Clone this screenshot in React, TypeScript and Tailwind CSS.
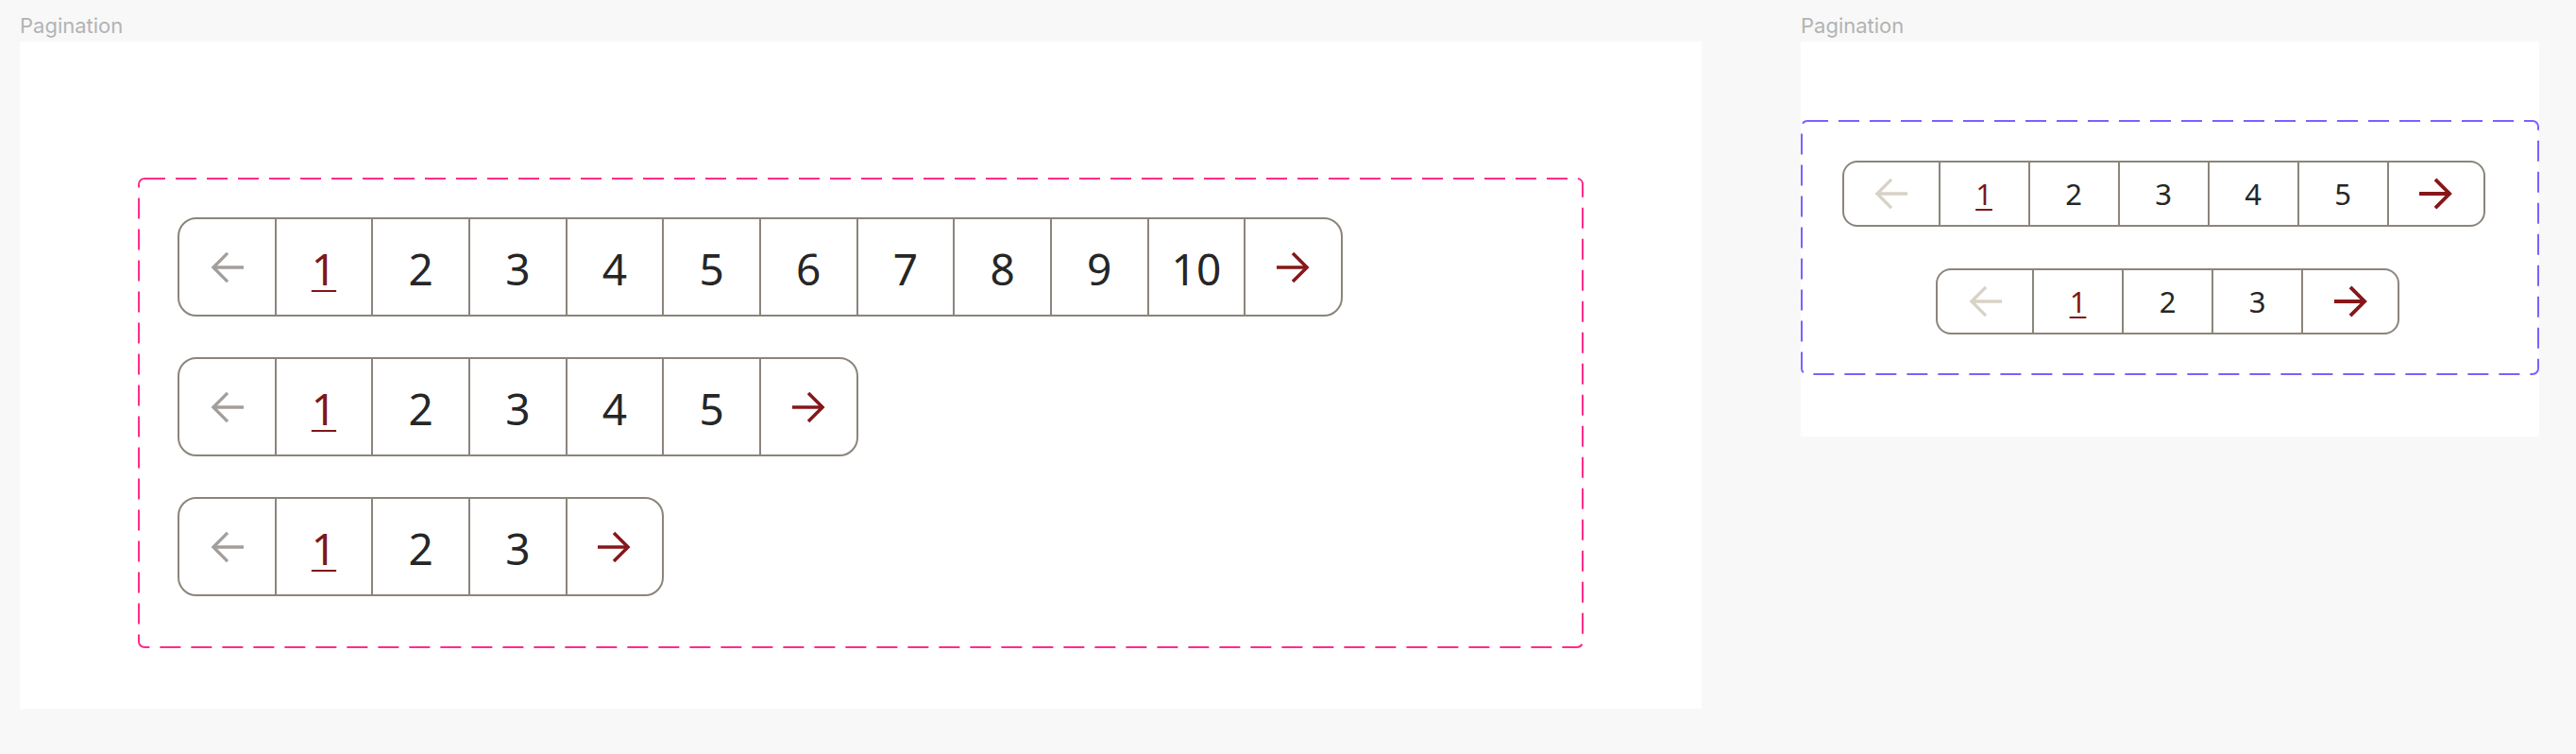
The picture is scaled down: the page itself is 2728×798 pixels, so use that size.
import React from "react";

type Size = "lg" | "sm";

function ArrowLeft({ color, w, h, sw }: { color: string; w: number; h: number; sw: number }) {
  return (
    <svg width={w} height={h} viewBox="0 0 36 34" fill="none">
      <path d="M3 17 H36" stroke={color} strokeWidth={sw} strokeLinecap="butt" />
      <path d="M18.5 1.5 L3 17 L18.5 32.5" stroke={color} strokeWidth={sw} strokeLinecap="butt" strokeLinejoin="miter" />
    </svg>
  );
}

function ArrowRight({ color, w, h, sw }: { color: string; w: number; h: number; sw: number }) {
  return (
    <svg width={w} height={h} viewBox="0 0 36 34" fill="none">
      <path d="M0 17 H33" stroke={color} strokeWidth={sw} strokeLinecap="butt" />
      <path d="M17.5 1.5 L33 17 L17.5 32.5" stroke={color} strokeWidth={sw} strokeLinecap="butt" strokeLinejoin="miter" />
    </svg>
  );
}

function Pagination({ count, size, className = "" }: { count: number; size: Size; className?: string }) {
  const lg = size === "lg";
  const pages = Array.from({ length: count }, (_, i) => i + 1);
  const firstCell = lg ? "w-[100.67px] h-[101px]" : "w-[100px] h-[66px]";
  const lastCell = lg ? "w-[102.67px] h-[101px]" : "w-[102px] h-[66px]";
  const numCell = lg ? "w-[102.67px] h-[101px]" : "w-[95px] h-[66px]";
  const text = lg ? "text-[46px] pt-[2px]" : "text-[31px] pt-[1px]";
  return (
    <div
      className={
        "flex border-2 border-[#8b857b] bg-white overflow-hidden " +
        (lg ? "rounded-[20px] " : "rounded-[16px] ") +
        className
      }
    >
      <div className={"flex items-center justify-center shrink-0 " + firstCell}>
        <ArrowLeft color={lg ? "#a49e9b" : "#d8d2c6"} w={35} h={34} sw={3.4} />
      </div>
      {pages.map((p) => (
        <div
          key={p}
          className={
            "flex items-center justify-center shrink-0 border-l-2 border-[#8b857b] font-['Noto_Sans',sans-serif] leading-none " +
            numCell +
            " " +
            text
          }
        >
          {p === 1 ? (
            <span
              className={
                "text-[#7e1719] underline " +
                (lg ? "decoration-2 underline-offset-[5px]" : "decoration-[1.5px] underline-offset-[4px]")
              }
            >
              1
            </span>
          ) : (
            <span className="text-[#262626]">{p}</span>
          )}
        </div>
      ))}
      <div className={"flex items-center justify-center shrink-0 border-l-2 border-[#8b857b] " + lastCell}>
        <ArrowRight color="#86171a" w={35} h={34} sw={lg ? 3.6 : 4} />
      </div>
    </div>
  );
}

function Label() {
  return (
    <div className="h-[44px] pt-[14px] font-['Inter',sans-serif] text-[22px] leading-[27px] text-[#b3b3b3]">
      Pagination
    </div>
  );
}

export default function App() {
  return (
    <div className="flex w-[2728px] h-[798px] bg-[#f8f8f8] pl-[21px] gap-[105px]">
      <div className="flex flex-col">
        <Label />
        <div className="w-[1781px] h-[706px] bg-white pl-[125px] pt-[144px]">
          <div className="relative w-[1531px] h-[498px] pl-[42px] pt-[42px] flex flex-col gap-[43px]">
            <svg className="absolute inset-0 pointer-events-none" width={1531} height={498}>
              <rect x={1} y={1} width={1529} height={496} rx={6} fill="none" stroke="#ff2b8a" strokeWidth={2} strokeDasharray="22 11" />
            </svg>
            <div className="flex">
              <Pagination count={10} size="lg" />
            </div>
            <div className="flex">
              <Pagination count={5} size="lg" />
            </div>
            <div className="flex">
              <Pagination count={3} size="lg" />
            </div>
          </div>
        </div>
      </div>
      <div className="flex flex-col">
        <Label />
        <div className="w-[782px] h-[418px] bg-white pt-[83px]">
          <div className="relative w-[782px] h-[270px] flex flex-col items-center justify-center gap-[44px]">
            <svg className="absolute inset-0 pointer-events-none" width={782} height={270}>
              <rect x={1} y={1} width={780} height={268} rx={6} fill="none" stroke="#7b61ff" strokeWidth={2} strokeDasharray="22 11" />
            </svg>
            <Pagination count={5} size="sm" className="mr-[14px]" />
            <Pagination count={3} size="sm" className="mr-[5px]" />
          </div>
        </div>
      </div>
    </div>
  );
}
